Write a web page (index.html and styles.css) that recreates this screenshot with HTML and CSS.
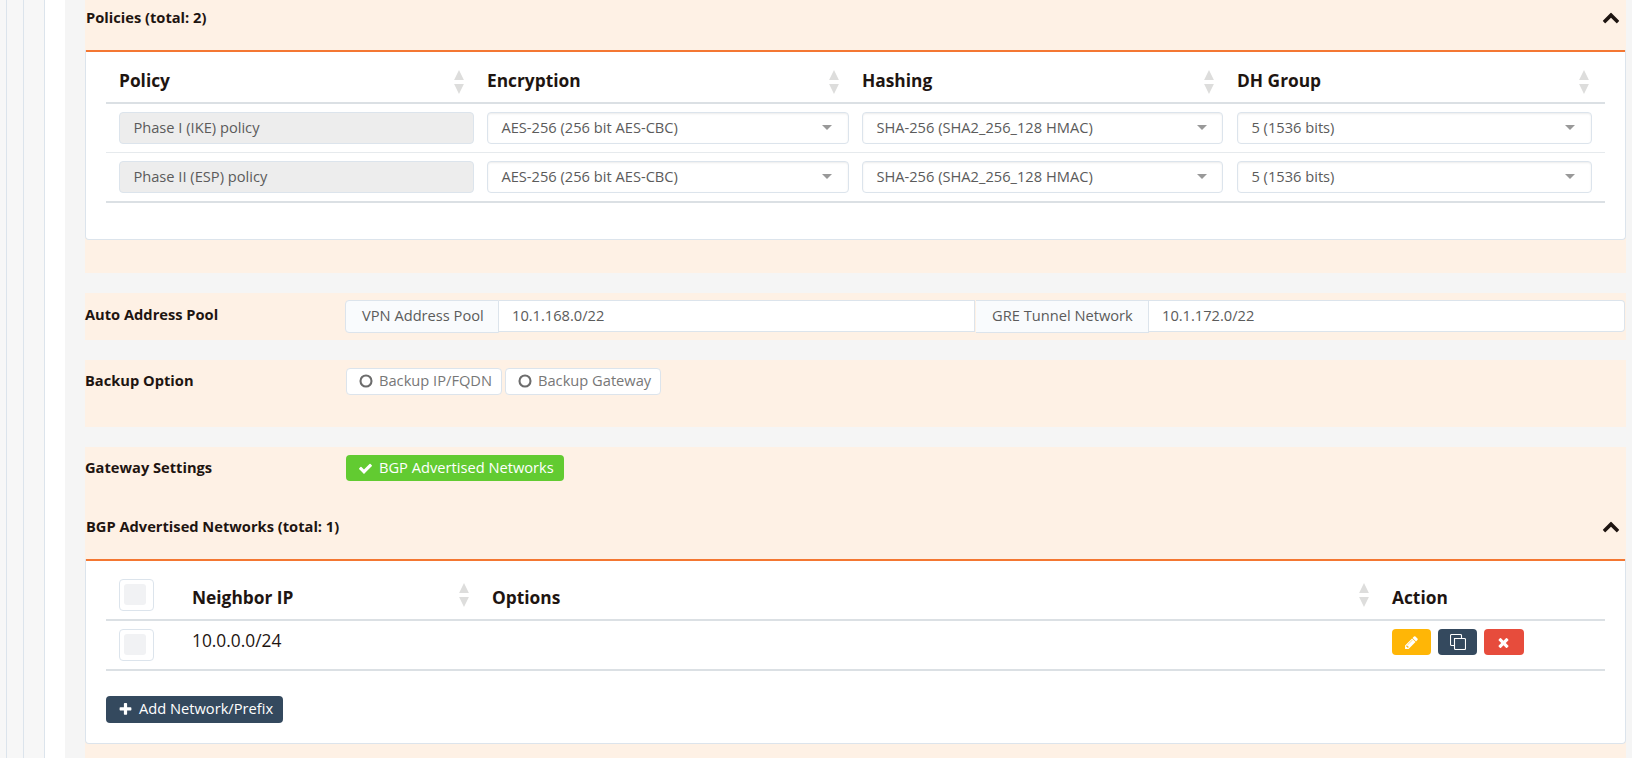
FILE: index.html
```html
<!DOCTYPE html>
<html lang="en">
<head>
<meta charset="utf-8">
<title>VPN Settings</title>
<link rel="stylesheet" href="styles.css">
</head>
<body>
<svg class="defs" aria-hidden="true">
  <symbol id="chevron" viewBox="0 0 1792 1792"><path d="M1683 1331l-166 165q-19 19-45 19t-45-19l-531-531-531 531q-19 19-45 19t-45-19l-166-165q-19-19-19-45.500t19-45.500l742-741q19-19 45-19t45 19l742 741q19 19 19 45.500t-19 45.500z"/></symbol>
  <symbol id="check" viewBox="0 0 1792 1792"><path d="M1671 566q0 40-28 68l-724 724-136 136q-28 28-68 28t-68-28l-136-136-362-362q-28-28-28-68t28-68l136-136q28-28 68-28t68 28l294 295 656-657q28-28 68-28t68 28l136 136q28 28 28 68z"/></symbol>
  <symbol id="plus" viewBox="0 0 1792 1792"><path d="M1600 736v192q0 40-28 68t-68 28h-416v416q0 40-28 68t-68 28h-192q-40 0-68-28t-28-68v-416h-416q-40 0-68-28t-28-68v-192q0-40 28-68t68-28h416v-416q0-40 28-68t68-28h192q40 0 68 28t28 68v416h416q40 0 68 28t28 68z"/></symbol>
  <symbol id="times" viewBox="0 0 1792 1792"><path d="M1490 1322q0 40-28 68l-136 136q-28 28-68 28t-68-28l-294-294-294 294q-28 28-68 28t-68-28l-136-136q-28-28-28-68t28-68l294-294-294-294q-28-28-28-68t28-68l136-136q28-28 68-28t68 28l294 294 294-294q28-28 68-28t68 28l136 136q28 28 28 68t-28 68l-294 294 294 294q28 28 28 68z"/></symbol>
  <symbol id="pencil" viewBox="0 0 1792 1792"><path d="M491 1536l91-91-235-235-91 91v107h128v128h107zm523-928q0-22-22-22-10 0-17 7l-542 542q-7 7-7 17 0 22 22 22 10 0 17-7l542-542q7-7 7-17zm-54-192l416 416-832 832h-416v-416zm683 96q0 53-37 90l-166 166-416-416 166-165q36-38 90-38 53 0 91 38l235 234q37 39 37 91z"/></symbol>
  <symbol id="clone" viewBox="0 0 16 16"><path d="M4 11.500H1.500a1 1 0 0 1-1-1v-9a1 1 0 0 1 1-1h9a1 1 0 0 1 1 1V4M4.500 4.500h10a1 1 0 0 1 1 1v9a1 1 0 0 1-1 1h-9a1 1 0 0 1-1-1z" fill="none" stroke="currentColor" stroke-width="1.100"/></symbol>
  <symbol id="sort" viewBox="0 0 10 24"><path d="M5 0l4.900 10H.1zM.1 14h9.800L5 24z"/></symbol>
  <symbol id="circle" viewBox="0 0 14 14"><circle cx="7" cy="7" r="5.500" fill="none" stroke="currentColor" stroke-width="2.100"/></symbol>
</svg>
<div class="shell">
  <div class="rail rail-a"></div>
  <div class="rail rail-b"></div>
  <div class="rail rail-c"></div>
  <div class="gutter"></div>
  <main class="content">
    <section class="block block-policies">
      <header class="panel-head"><span>Policies (total: 2)</span><svg class="chev"><use href="#chevron"/></svg></header>
      <div class="panel panel-policies">
        <div class="policy-row policy-head">
          <div class="th"><span>Policy</span><svg class="sort"><use href="#sort"/></svg></div>
          <div class="th"><span>Encryption</span><svg class="sort"><use href="#sort"/></svg></div>
          <div class="th"><span>Hashing</span><svg class="sort"><use href="#sort"/></svg></div>
          <div class="th"><span>DH Group</span><svg class="sort"><use href="#sort"/></svg></div>
        </div>
        <div class="policy-row policy-first">
          <div class="field disabled">Phase I (IKE) policy</div>
          <div class="field select">AES-256 (256 bit AES-CBC)</div>
          <div class="field select">SHA-256 (SHA2_256_128 HMAC)</div>
          <div class="field select">5 (1536 bits)</div>
        </div>
        <div class="policy-row policy-last">
          <div class="field disabled">Phase II (ESP) policy</div>
          <div class="field select">AES-256 (256 bit AES-CBC)</div>
          <div class="field select">SHA-256 (SHA2_256_128 HMAC)</div>
          <div class="field select">5 (1536 bits)</div>
        </div>
      </div>
    </section>

    <section class="block block-pool">
      <div class="label">Auto Address Pool</div>
      <div class="group">
        <span class="addon addon-vpn">VPN Address Pool</span>
        <span class="input input-vpn">10.1.168.0/22</span>
        <span class="addon addon-gre">GRE Tunnel Network</span>
        <span class="input input-gre">10.1.172.0/22</span>
      </div>
    </section>

    <section class="block block-backup">
      <div class="label">Backup Option</div>
      <div class="options">
        <div class="btn toggle"><svg class="ring"><use href="#circle"/></svg><span>Backup IP/FQDN</span></div>
        <div class="btn toggle"><svg class="ring"><use href="#circle"/></svg><span>Backup Gateway</span></div>
      </div>
    </section>

    <section class="block block-gateway">
      <div class="gateway-row">
        <div class="label">Gateway Settings</div>
        <div class="btn success"><svg class="icon"><use href="#check"/></svg><span>BGP Advertised Networks</span></div>
      </div>
      <header class="panel-head"><span>BGP Advertised Networks (total: 1)</span><svg class="chev"><use href="#chevron"/></svg></header>
      <div class="panel panel-bgp">
        <div class="bgp-row bgp-head">
          <div class="checkbox"></div>
          <div class="th"><span>Neighbor IP</span><svg class="sort"><use href="#sort"/></svg></div>
          <div class="th"><span>Options</span><svg class="sort"><use href="#sort"/></svg></div>
          <div class="th"><span>Action</span></div>
        </div>
        <div class="bgp-row bgp-data">
          <div class="checkbox"></div>
          <div class="ip">10.0.0.0/24</div>
          <div></div>
          <div class="actions">
            <span class="act edit"><svg class="icon"><use href="#pencil"/></svg></span>
            <span class="act copy"><svg class="clone"><use href="#clone"/></svg></span>
            <span class="act remove"><svg class="icon"><use href="#times"/></svg></span>
          </div>
        </div>
        <div class="btn add"><svg class="icon"><use href="#plus"/></svg><span>Add Network/Prefix</span></div>
      </div>
    </section>
  </main>
</div>
</body>
</html>
```

FILE: styles.css
```css
* { box-sizing: border-box; }
body {
  margin: 0;
  height: 758px;
  overflow: hidden;
  background: #f5f5f5;
  color: #1e1511;
  font: 14.67px/20px "Open Sans", "Noto Sans", sans-serif;
}
svg { display: block; fill: currentColor; flex: none; }
.defs { width: 0; height: 0; position: absolute; }
.shell { display: flex; height: 758px; }
.rail { background: #f7f7f7; border-right: 1px solid #dce4ec; flex: none; }
.rail-a { width: 7px; }
.rail-b { width: 17px; }
.rail-c { width: 21px; }
.gutter { width: 20px; background: #fff; flex: none; }
.content { width: 1541px; margin-left: 20px; flex: none; }
.block { background: #fef1e5; margin-bottom: 20px; }

.block-policies { height: 273px; }
.panel-head {
  display: flex;
  justify-content: space-between;
  align-items: center;
  height: 50px;
  padding: 0 6px 16px 1px;
  font-weight: 700;
}
.chev { width: 18px; height: 18px; }
.panel {
  background: #fff;
  border: 1px solid #dce4ec;
  border-top: 0;
  border-radius: 0 0 4px 4px;
  padding: 0 20px;
}
.panel::before {
  content: "";
  display: block;
  height: 2px;
  margin: 0 -20px;
  background: #f47732;
}
.panel-policies { height: 190px; }
.policy-row {
  display: grid;
  grid-template-columns: 355px 362px 361px 355px;
  column-gap: 13px;
  padding: 0 13px;
}
.policy-row > :last-child { margin: 0 -1px 0 1px; }
.policy-head { height: 52px; border-bottom: 2px solid #dbe0e4; }
.th {
  display: flex;
  justify-content: space-between;
  padding-right: 10px;
  font-size: 17.33px;
  font-weight: 700;
  line-height: 24px;
}
.policy-head .th { padding-top: 16px; }
.policy-head .th:nth-child(3) { padding-right: 9px; }
.policy-head .th:last-child { padding-right: 3px; }
.sort { width: 10px; height: 24px; color: #dddddc; margin-top: 2px; }
.policy-first { height: 49px; padding-top: 8px; border-bottom: 1px solid #e6eaed; }
.policy-last { height: 50px; padding-top: 8px; border-bottom: 2px solid #dbe0e4; }
.field {
  height: 32px;
  border: 1px solid #dce4ec;
  border-radius: 4px;
  padding: 0 13.4px;
  color: #5b5b5b;
  line-height: 28px;
  white-space: nowrap;
}
.disabled { background: #ededed; }
.select {
  display: flex;
  justify-content: space-between;
  padding-right: 16px;
  background: #fff;
  box-shadow: inset 0 1px 2px rgba(0, 0, 0, .075);
}
.select:nth-child(3) { padding-right: 15px; }
.select::after {
  content: "";
  height: 0;
  border: 5px solid transparent;
  border-top-color: #999;
  border-bottom: 0;
  margin-top: 12px;
}

.label { width: 261px; font-weight: 700; flex: none; }
.block-pool { display: flex; height: 47px; padding-top: 7px; }
.block-pool .label { padding-top: 4px; }
.group { display: flex; margin-left: -1px; width: 1280px; }
.addon, .input {
  border: 1px solid #dce4ec;
  color: #5b5b5b;
  line-height: 28px;
  white-space: nowrap;
}
.addon { height: 33px; background: #f9fbfd; }
.input { height: 32px; background: #fff; border-left: 0; padding-left: 13px; }
.addon-vpn { width: 154px; padding-left: 16px; border-radius: 4px 0 0 4px; }
.input-vpn { width: 476px; }
.addon-gre { width: 173px; margin-left: 1px; padding-left: 16px; border-left: 0; }
.input-gre { flex: 1; border-radius: 0 4px 4px 0; }

.block-backup { display: flex; height: 67px; padding-top: 8px; }
.block-backup .label { padding-top: 2px; }
.options { display: flex; gap: 3px; }
.btn {
  display: flex;
  align-items: center;
  border-radius: 4px;
  white-space: nowrap;
}
.btn span { padding-bottom: 2px; }
.toggle {
  width: 156px;
  height: 27px;
  border: 1px solid #dce4ec;
  background: #fff;
  color: #777;
  padding: 0 0 1px 12px;
  gap: 6px;
}
.ring { width: 14px; height: 14px; color: #6c6c6c; }
.icon { width: 15px; height: 15px; }

.block-gateway { margin: 0; height: 311px; }
.gateway-row { display: flex; height: 62px; padding-top: 8px; }
.gateway-row .label { padding-top: 2px; }
.success { width: 218px; height: 26px; background: #62cb31; color: #fff; padding-left: 12px; gap: 6px; }
.panel-bgp { height: 185px; }
.bgp-row {
  display: grid;
  grid-template-columns: 73px 300px 900px 1fr;
  padding-left: 13px;
}
.bgp-head { height: 60px; border-bottom: 2px solid #dbe0e4; padding-top: 18px; }
.bgp-head .th { padding: 6px 23px 0 0; }
.bgp-head .sort { margin-top: -2px; }
.checkbox {
  width: 35px;
  height: 32px;
  border: 1px solid #dce4ec;
  border-radius: 4px;
  padding: 4px;
}
.checkbox::before { content: ""; display: block; width: 22px; height: 21px; border-radius: 3px; background: #f1f2f4; }
.bgp-data { height: 50px; border-bottom: 2px solid #dbe0e4; padding-top: 8px; }
.ip { font-size: 17.33px; line-height: 23px; }
.actions { display: flex; gap: 7px; }
.act {
  width: 39px;
  height: 26px;
  border-radius: 4px;
  display: flex;
  align-items: center;
  justify-content: center;
  color: #fff;
}
.edit { background: #ffb606; }
.copy { background: #34495e; }
.remove { background: #e74c3c; width: 40px; padding-right: 1px; }
.clone { width: 16px; height: 16px; }
.add { width: 177px; height: 27px; margin-top: 25px; background: #34495e; color: #fff; padding: 0 0 1px 12px; gap: 6px; }
```
